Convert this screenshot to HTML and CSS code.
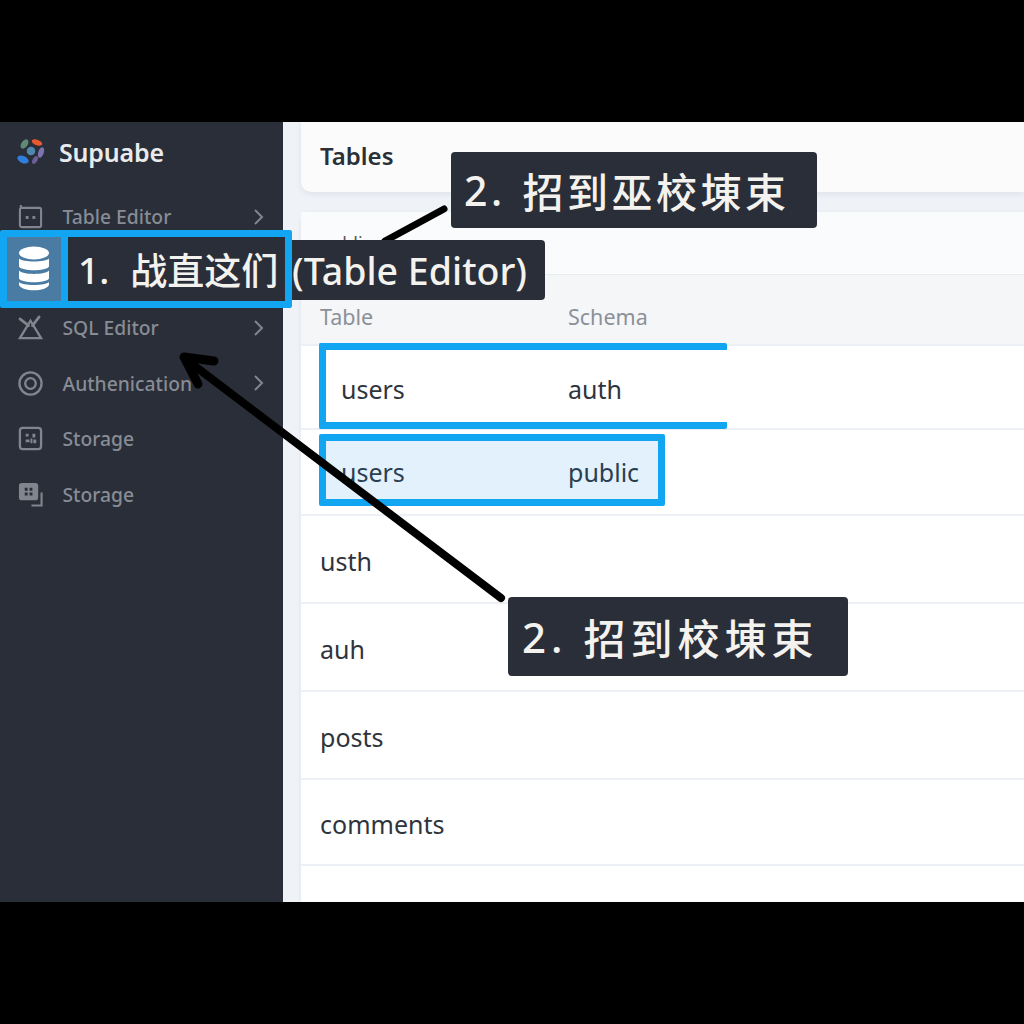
FILE: index.html
```html
<!DOCTYPE html>
<html lang="zh-CN">
<head>
<meta charset="utf-8">
<title>Supuabe</title>
<link rel="stylesheet" href="styles.css">
</head>
<body>
<div class="stage">
  <div class="app">
    <aside class="sidebar">
      <div class="brand">
        <svg class="logo" viewBox="0 0 30 30" width="30" height="30">
          <ellipse cx="8.5" cy="7" rx="3.2" ry="5.2" fill="#5f8a76" transform="rotate(35 8.500 7)"/>
          <ellipse cx="21" cy="5.5" rx="5.500" ry="2.800" fill="#e9582f" transform="rotate(22 21 5.500)"/>
          <ellipse cx="25" cy="15.500" rx="2.800" ry="5.500" fill="#7c74b0" transform="rotate(18 25 15.500)"/>
          <ellipse cx="19" cy="23" rx="2.300" ry="4.200" fill="#6b5f96" transform="rotate(30 19 23)"/>
          <ellipse cx="7" cy="22.500" rx="6" ry="3.500" fill="#2f7fdd" transform="rotate(25 7 22.500)"/>
          <circle cx="15" cy="14" r="4.300" fill="#4f87ad"/>
        </svg>
        <span class="brand-name">Supuabe</span>
      </div>
      <nav class="nav">
        <div class="nav-item">
          <svg class="nav-icon" viewBox="0 0 26 26"><path d="M3 1v4M3 4h19a2 2 0 0 1 2 2v16a2 2 0 0 1-2 2H4a2 2 0 0 1-2-2V6a2 2 0 0 1 1-2" fill="none" stroke="currentColor" stroke-width="2.200"/><rect x="8" y="12.500" width="3" height="3" fill="currentColor"/><rect x="15" y="12.500" width="3" height="3" fill="currentColor"/></svg>
          <span class="nav-label">Table Editor</span>
          <svg class="chevron" viewBox="0 0 12 18"><path d="M2 2l7 7-7 7" fill="none" stroke="currentColor" stroke-width="2"/></svg>
        </div>
        <div class="nav-item"></div>
        <div class="nav-item">
          <svg class="nav-icon" viewBox="0 0 26 26"><path d="M13 6L24 24H2z" fill="none" stroke="currentColor" stroke-width="2.400"/><path d="M2 4l9 7M22 2l-7 9" fill="none" stroke="currentColor" stroke-width="2.800" stroke-linecap="round"/></svg>
          <span class="nav-label">SQL Editor</span>
          <svg class="chevron" viewBox="0 0 12 18"><path d="M2 2l7 7-7 7" fill="none" stroke="currentColor" stroke-width="2"/></svg>
        </div>
        <div class="nav-item">
          <svg class="nav-icon" viewBox="0 0 26 26"><circle cx="13" cy="13" r="11.500" fill="none" stroke="currentColor" stroke-width="2.400"/><circle cx="13" cy="13" r="5.500" fill="none" stroke="currentColor" stroke-width="2.400"/></svg>
          <span class="nav-label">Authenication</span>
          <svg class="chevron" viewBox="0 0 12 18"><path d="M2 2l7 7-7 7" fill="none" stroke="currentColor" stroke-width="2"/></svg>
        </div>
        <div class="nav-item">
          <svg class="nav-icon" viewBox="0 0 26 26"><rect x="2" y="2" width="22" height="22" rx="3" fill="none" stroke="currentColor" stroke-width="2.400"/><path d="M8 8h3v3H8zM15 8h3v4h-3zM8 14h4v3H8zM13 13h2v5h-2zM16 14h3v4h-3z" fill="currentColor"/></svg>
          <span class="nav-label">Storage</span>
        </div>
        <div class="nav-item">
          <svg class="nav-icon" viewBox="0 0 26 26"><rect x="1" y="1" width="20" height="18" rx="3" fill="currentColor"/><path d="M7 6h3v3H7zM12 6h3v3h-3zM7 11h3v3H7zM12 11h3v3h-3z" fill="#292e38"/><path d="M24.500 11v13.500H14" fill="none" stroke="currentColor" stroke-width="2.200"/></svg>
          <span class="nav-label">Storage</span>
        </div>
      </nav>
    </aside>
    <main class="main">
      <header class="title-card"><h1 class="title">Tables</h1></header>
      <section class="table-card">
        <div class="card-head">public</div>
        <div class="row row-head"><span class="cell-name">Table</span><span>Schema</span></div>
        <div class="row row-1 row-indent"><span class="cell-name">users</span><span>auth</span></div>
        <div class="row row-2 row-indent"><span class="cell-name">users</span><span>public</span></div>
        <div class="row row-3"><span class="cell-name">usth</span></div>
        <div class="row row-3"><span class="cell-name">auh</span></div>
        <div class="row row-3"><span class="cell-name">posts</span></div>
        <div class="row row-4"><span class="cell-name">comments</span></div>
      </section>
    </main>
  </div>

  <div class="frame frame-auth"></div>
  <div class="frame frame-public"></div>

  <svg class="arrows" viewBox="0 0 1024 1024" width="1024" height="1024">
    <path d="M501 598L192 364" fill="none" stroke="#000" stroke-width="8" stroke-linecap="round"/>
    <path d="M214 361L184 357L198 384" fill="none" stroke="#000" stroke-width="9" stroke-linecap="round" stroke-linejoin="round"/>
    <path d="M444 209L385 241" fill="none" stroke="#000" stroke-width="7" stroke-linecap="round"/>
  </svg>

  <div class="callout callout-one">(Table Editor)</div>
  <div class="frame frame-nav">
    <div class="active-icon">
      <svg viewBox="0 0 32 46" width="32" height="46"><ellipse cx="16" cy="7" rx="15" ry="6.500" fill="#fff"/><path d="M1 12.500c3 4 27 4 30 0v8c-3 5-27 5-30 0z" fill="#fff"/><path d="M1 24.500c3 4.500 27 4.500 30 0v8c-3 5-27 5-30 0z" fill="#fff"/><path d="M1 36c3 4 27 4 30 0v3c-3 7-27 7-30 0z" fill="#fff"/></svg>
    </div>
    <div class="frame-fill"><span class="num">1.</span><span>战直这们</span></div>
  </div>
  <div class="callout callout-two"><span class="num">2.</span><span>招到巫校埬束</span></div>
  <div class="callout callout-three"><span class="num">2.</span><span>招到校埬束</span></div>
</div>
</body>
</html>
```
FILE: styles.css
```css
* { box-sizing: border-box; }
html, body { margin: 0; height: 1024px; overflow: hidden; background: #000; }
body { font-family: "Noto Sans", "Noto Sans CJK SC", sans-serif; }
.stage { position: relative; width: 1024px; height: 1024px; padding-top: 122px; }
.app { display: flex; height: 780px; overflow: hidden; background: #eff2f7; }

.sidebar { width: 283px; flex: none; background: #292e38; color: #878c95; }
.brand { display: flex; align-items: center; gap: 13px; height: 60px; padding-left: 16px; }
.logo { flex: none; }
.brand-name { font-size: 25px; font-weight: 600; color: #e8eaec; letter-spacing: -0.2px; }
.nav { display: flex; flex-direction: column; margin-top: 7px; }
.nav-item { display: flex; align-items: center; height: 55.500px; padding-left: 18px; padding-right: 18px; }
.nav-icon { width: 25px; height: 25px; flex: none; color: #80858e; }
.nav-label { flex: 1; margin-left: 19.500px; font-size: 19.300px; font-weight: 500; white-space: nowrap; }
.chevron { width: 12px; height: 18px; flex: none; color: #80858e; }

.main { flex: 1; display: flex; flex-direction: column; gap: 20px; padding-left: 18px; min-width: 0; }
.title-card { height: 70px; flex: none; display: flex; align-items: center; padding: 0 0 4px 19px; background: #fbfbfc; border-radius: 0 0 0 10px; box-shadow: 0 2px 6px rgba(40, 50, 70, .08); }
.title { margin: 0; font-size: 24px; font-weight: 600; color: #2b3038; }
.table-card { flex: 1; display: flex; flex-direction: column; background: #fff; border-radius: 10px 0 0 0; box-shadow: 0 1px 5px rgba(40, 50, 70, .07); color: #2f343c; font-size: 25px; }
.card-head { height: 63px; flex: none; padding: 19px 0 0 19px; background: #fafbfc; font-size: 18px; color: #555; border-bottom: 1px solid #e8ebef; }
.row { display: flex; align-items: center; flex: none; height: 88px; padding: 4px 0 0 19px; background: #fff; border-bottom: 2px solid #eceff3; }
.row-head { height: 71px; padding-top: 14px; background: #f5f6f8; color: #8b9098; font-size: 21.500px; }
.row-1 { height: 84px; }
.row-2 { height: 86px; padding-top: 0; }
.row-4 { height: 86px; }
.row-indent { padding-left: 40px; }
.row-indent .cell-name { width: 227px; }
.cell-name { width: 248px; }

.frame { position: absolute; border: 7px solid #12a5f2; border-radius: 2px; }
.frame-nav { left: 0; top: 230px; width: 292px; height: 78px; display: flex; gap: 7px; background: #12a5f2; color: #f4f2ee; }
.active-icon { width: 54px; flex: none; display: flex; align-items: center; justify-content: center; background: #4a7ba3; }
.frame-fill { flex: 1; display: flex; align-items: center; padding-left: 10px; background: #292e38; font-size: 37px; font-weight: 500; white-space: nowrap; overflow: hidden; }
.frame-fill .num { margin-right: 21px; }
.frame-auth { left: 319px; top: 343px; width: 408px; height: 86px; border-right: 0; }
.frame-public { left: 319px; top: 434px; width: 346px; height: 72px; background: rgba(18, 140, 230, .12); }
.arrows { position: absolute; left: 0; top: 0; pointer-events: none; }
.callout { position: absolute; display: flex; align-items: center; background: #292e38; color: #f4f2ee; border-radius: 4px; white-space: nowrap; font-weight: 500; }
.callout-one { left: 285px; top: 240px; width: 260px; height: 60px; padding-left: 7px; font-size: 37.500px; }
.callout-two { left: 451px; top: 152px; width: 366px; height: 76px; padding-left: 13px; font-size: 41px; letter-spacing: 3.500px; }
.callout-two .num { margin-right: 17px; }
.callout-three { left: 508px; top: 597px; width: 340px; height: 79px; padding-left: 14px; font-size: 42px; letter-spacing: 5px; }
.callout-three .num { margin-right: 16px; }
```
